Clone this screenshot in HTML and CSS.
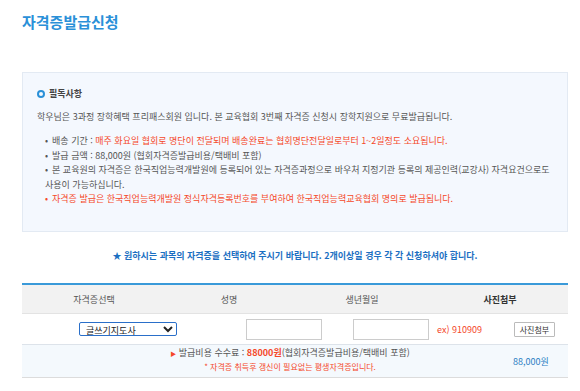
FILE: index.html
```html
<!doctype html>
<html lang="ko">
<head>
<meta charset="UTF-8">
<title>자격증발급신청</title>
<link rel="stylesheet" href="styles.css">
</head>
<body>
	<div class="page">
		<h1 class="pageTitle">자격증발급신청</h1>

		<div class="noticeBox">
			<div class="noticeHead"><span class="ring"></span>필독사항</div>
			<p class="noticeText">학우님은 3과정 장학혜택 프리패스회원 입니다. 본 교육협회 3번째 자격증 신청시 장학지원으로 무료발급됩니다.</p>
			<ul class="noticeList">
				<li>배송 기간 : <span class="red">매주 화요일 협회로 명단이 전달되며 배송완료는 협회명단전달일로부터 1~2일정도 소요됩니다.</span></li>
				<li>발급 금액 : 88,000원 (협회자격증발급비용/택배비 포함)</li>
				<li>본 교육원의 자격증은 한국직업능력개발원에 등록되어 있는 자격증과정으로 바우처 지정기관 등록의 제공인력(교강사) 자격요건으로도 사용이 가능하십니다.</li>
				<li class="red">자격증 발급은 한국직업능력개발원 정식자격등록번호를 부여하여 한국직업능력교육협회 명의로 발급됩니다.</li>
			</ul>
		</div>

		<p class="guide">★ 원하시는 과목의 자격증을 선택하여 주시기 바랍니다. 2개이상일 경우 각 각 신청하셔야 합니다.</p>

		<div class="applyTable">
			<div class="headRow">
				<div class="headCell c1">자격증선택</div>
				<div class="headCell c2">성명</div>
				<div class="headCell c3">생년월일</div>
				<div class="headCell c4 strong">사진첨부</div>
			</div>
			<div class="dataRow">
				<select class="certSelect">
					<option>글쓰기지도사</option>
				</select>
				<input type="text" class="textInput nameInput">
				<input type="text" class="textInput birthInput">
				<span class="example">ex) 910909</span>
				<button class="photoBtn">사진첨부</button>
			</div>
			<div class="feeRow">
				<div class="feeInfo">
					<div class="feeLine"><span class="arrow">▶</span> 발급비용 수수료 : <b class="red">88000원</b>(협회자격증발급비용/택배비 포함)</div>
					<div class="feeNote">* 자격증 취득후 갱신이 필요없는 평생자격증입니다.</div>
				</div>
				<div class="feeTotal">88,000원</div>
			</div>
		</div>
	</div>
</body>
</html>
```

FILE: styles.css
```css
body {
	margin: 0;
	padding: 0;
	background-color: white;
	font-family: "Noto Sans CJK KR", "Noto Sans", sans-serif;
	color: #555;
}

.page {
	width: 546px;
	padding: 0 12px 0 22px;
}

.pageTitle {
	margin: 0;
	padding-top: 12px;
	height: 60px;
	font-size: 15px;
	line-height: 20px;
	color: #2a90d8;
}

.red {
	color: #f4482a;
}

.noticeBox {
	background-color: #f4f8fe;
	border: 1px solid #e3eaf3;
	padding: 14px 14px 0 14px;
	height: 144px;
	font-size: 9px;
	line-height: 14.5px;
}

.noticeHead {
	font-weight: bold;
	color: #444;
	display: flex;
	align-items: center;
	gap: 4px;
}

.ring {
	display: inline-block;
	width: 4px;
	height: 4px;
	border: 2px solid #2a90d8;
	border-radius: 50%;
}

.noticeText {
	margin: 8px 0 10px 0;
}

.noticeList {
	margin: 0;
	padding: 0 0 0 8px;
	list-style: none;
}

.noticeList li::before {
	content: "•";
	margin-right: 4px;
}

.guide {
	margin: 17px 0 0 0;
	height: 34px;
	text-align: center;
	font-size: 9px;
	line-height: 14px;
	font-weight: bold;
	color: #1b6fc2;
}

.applyTable {
	border-top: 2px solid #3a9ad9;
	font-size: 9px;
}

.headRow {
	display: grid;
	grid-template-columns: 144px 126px 140px 136px;
	height: 28px;
	align-items: center;
	background-color: #f2f2f2;
	border-bottom: 1px solid #e3e3e3;
	text-align: center;
	color: #555;
}

.headCell.strong {
	font-weight: bold;
	color: #333;
}

.dataRow {
	display: flex;
	align-items: center;
	height: 30px;
	border-bottom: 1px solid #dde3ea;
}

.certSelect {
	margin-left: 57px;
	width: 98px;
	height: 14px;
	padding: 0 2px;
	font-family: inherit;
	font-size: 9px;
	color: #222;
	border: 1px solid #2a6fc9;
	border-radius: 2px;
	background-color: white;
}

.textInput {
	box-sizing: border-box;
	height: 21px;
	border: 1px solid #ccc;
	padding: 0;
}

.nameInput {
	margin-left: 69px;
	width: 76px;
}

.birthInput {
	margin-left: 31px;
	width: 76px;
}

.example {
	margin-left: 8px;
	color: #f4482a;
	font-size: 9px;
}

.photoBtn {
	margin-left: 32px;
	width: 41px;
	height: 15px;
	padding: 0;
	font-family: inherit;
	font-size: 8px;
	color: #333;
	background-color: white;
	border: 1px solid #bbb;
	border-radius: 1px;
}

.feeRow {
	display: flex;
	align-items: center;
	height: 32px;
	background-color: #f4f9fd;
	border-bottom: 1px solid #dcdcdc;
}

.feeInfo {
	flex: 1;
	padding-left: 100px;
	padding-bottom: 3px;
	text-align: center;
	line-height: 13px;
}

.feeLine {
	color: #555;
}

.arrow {
	color: #f4482a;
	font-size: 6px;
}

.feeNote {
	color: #f4482a;
	font-size: 8px;
}

.feeTotal {
	width: 55px;
	padding-left: 55px;
	color: #2a80c4;
}
```
